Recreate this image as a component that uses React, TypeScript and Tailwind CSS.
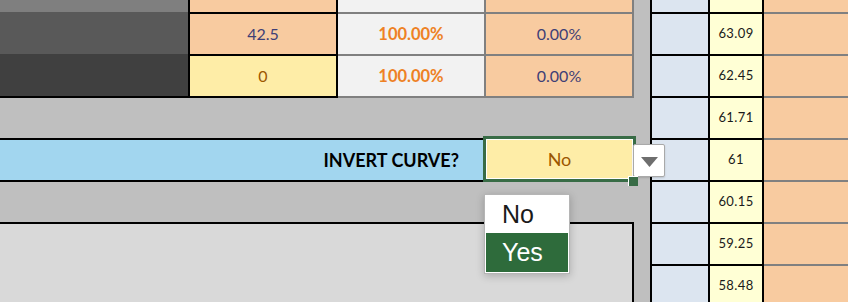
import React from 'react'

// right-hand column values (first row is cut off at the top)
const rightValues = ['', '63.09', '62.45', '61.71', '61', '60.15', '59.25', '58.48']

function TopTable() {
  return (
    <div className="flex w-[634px] flex-col text-[16px]">
      {/* partial row at the top */}
      <div className="flex h-[12px]">
        <div className="w-[190px] border-r-2 border-black bg-[#7f7f7f]" />
        <div className="w-[148px] border-r-2 border-black bg-[#f8cba0]" />
        <div className="w-[148px] border-r-2 border-[#808080] bg-[#f2f2f2]" />
        <div className="w-[148px] border-r-2 border-[#808080] bg-[#f8cba0]" />
      </div>
      <div className="flex h-[42px]">
        <div className="w-[190px] border-r-2 border-black bg-[#595959]" />
        <div className="flex w-[148px] items-center justify-center border-t-2 border-r-2 border-black bg-[#f8cba0] text-[#3f3f76]">
          42.5
        </div>
        <div className="flex w-[148px] items-center justify-center border-t-2 border-r-2 border-[#808080] bg-[#f2f2f2] text-[16.5px] font-bold text-[#ee8124]">
          100.00%
        </div>
        <div className="flex w-[148px] items-center justify-center border-t-2 border-r-2 border-[#808080] bg-[#f8cba0] text-[#3f3f76]">
          0.00%
        </div>
      </div>
      <div className="flex h-[44px]">
        <div className="w-[190px] border-r-2 border-b-2 border-black bg-[#404040]" />
        <div className="flex w-[148px] items-center justify-center border-y-2 border-r-2 border-black bg-[#feeda7] text-[#9c5700]">
          0
        </div>
        <div className="flex w-[148px] items-center justify-center border-y-2 border-r-2 border-[#808080] bg-[#f2f2f2] text-[16.5px] font-bold text-[#ee8124]">
          100.00%
        </div>
        <div className="flex w-[148px] items-center justify-center border-y-2 border-r-2 border-[#808080] bg-[#f8cba0] text-[#3f3f76]">
          0.00%
        </div>
      </div>
    </div>
  )
}

function RightGrid() {
  return (
    <div className="flex w-[198px] flex-col border-l-2 border-black">
      {rightValues.map((v, i) => (
        <div key={i} className={i === 0 ? 'flex h-[12px] shrink-0' : 'flex h-[42px] shrink-0'}>
          <div
            className={
              i === 0
                ? 'w-[58px] border-r-2 border-black bg-[#dce5f0]'
                : 'w-[58px] border-t-2 border-r-2 border-black bg-[#dce5f0]'
            }
          />
          <div
            className={
              i === 0
                ? 'w-[54px] border-r-2 border-black bg-[#ffffd5]'
                : 'flex w-[54px] items-center justify-center border-t-2 border-r-2 border-black bg-[#ffffd5] text-[13px] tracking-[0.4px] text-[#1a1a1a]'
            }
          >
            {v}
          </div>
          <div
            className={
              i === 0
                ? 'flex-1 bg-[#f8cba0]'
                : 'flex-1 border-t-2 border-[#808080] bg-[#f8cba0]'
            }
          />
        </div>
      ))}
    </div>
  )
}

export default function App() {
  return (
    <div className="relative flex h-[302px] w-[848px] overflow-hidden bg-[#bfbfbf] font-['Lato',sans-serif]">
      <div className="flex w-[650px] flex-col">
        <TopTable />
        <div className="h-[40px] shrink-0" />

        {/* INVERT CURVE? row */}
        <div className="flex h-[44px] shrink-0 items-end">
          <div className="flex h-[44px] w-[483px] items-center justify-end border-y-2 border-black bg-[#a2d6ef] pr-[24px] text-[18px] font-bold text-black">
            INVERT CURVE?
          </div>
          <div className="h-[46px] w-[153px] shrink-0 border-[3px] border-[#386c46]">
            <div className="flex h-full items-center justify-center border border-white bg-[#feeda7] text-[18px] text-[#9c5700]">
              No
            </div>
          </div>
        </div>

        <div className="h-[40px] shrink-0" />
        <div className="w-[634px] flex-1 border-t-2 border-r-2 border-black bg-[#d9d9d9]" />
      </div>

      <RightGrid />

      {/* dropdown arrow of the validated cell */}
      <div className="absolute top-[144px] left-[633px] flex h-[33px] w-[32px] items-center justify-center rounded-[2px] border border-[#a9a9a9] bg-white shadow-[0_1px_2px_rgba(0,0,0,0.15)]">
        <svg width="17" height="10" viewBox="0 0 17 10" className="mt-[3px]">
          <polygon points="0,0 17,0 8.5,10" fill="#6e6e6e" />
        </svg>
      </div>

      {/* fill handle */}
      <div className="absolute top-[176px] left-[628px] h-[10px] w-[10px] border-t border-l border-white bg-[#386c46]" />

      {/* open list */}
      <div className="absolute top-[194px] left-[484px] flex w-[86px] flex-col border border-[#b5b5b5] bg-white p-px font-['Liberation_Sans',Arial,sans-serif] text-[25px] shadow-[0_2px_8px_rgba(0,0,0,0.22)]">
        <div className="flex h-[37px] items-center pl-[16px] text-[#1a1a1a]">No</div>
        <div className="flex h-[39px] items-center bg-[#2e6b3b] pl-[16px] text-white">Yes</div>
      </div>
    </div>
  )
}
